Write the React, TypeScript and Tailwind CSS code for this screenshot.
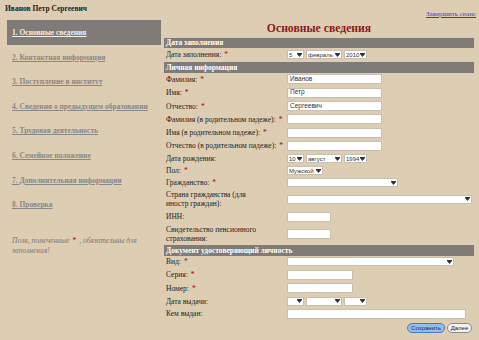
const serif = { fontFamily: '"Liberation Serif", "Times New Roman", serif' };
const sans = { fontFamily: '"Liberation Sans", Arial, sans-serif' };

const menu = [
  "1. Основные сведения",
  "2. Контактная информация",
  "3. Поступление в институт",
  "4. Сведения о предыдущем образовании",
  "5. Трудовая деятельность",
  "6. Семейное положение",
  "7. Дополнительная информация",
  "8. Проверка",
];

function Req() {
  return <span className="ml-[3px] text-[#b00000]">*</span>;
}

function Arrow() {
  return (
    <svg width="5" height="4" viewBox="0 0 5 4" className="shrink-0">
      <rect x="0" y="0" width="5" height="1" fill="#333" />
      <polygon points="0,1 5,1 2.5,4" fill="#333" />
    </svg>
  );
}

function Select({ w, value = "" }: { w: string; value?: string }) {
  return (
    <div
      className={`${w} h-[9px] bg-white border border-[#c6bfb2] flex items-center justify-between pl-[1px] pr-[1px] text-[6px] leading-none text-[#333] overflow-hidden whitespace-nowrap`}
      style={sans}
    >
      <span>{value}</span>
      <Arrow />
    </div>
  );
}

function Input({ w = "w-[95px]", value = "" }: { w?: string; value?: string }) {
  return (
    <div
      className={`${w} h-[10px] bg-white border border-[#c6bfb2] flex items-center px-[2px] text-[6.5px] leading-none text-[#333]`}
      style={sans}
    >
      {value}
    </div>
  );
}

function Row({ h, label, req, children }: { h: string; label: React.ReactNode; req?: boolean; children: React.ReactNode }) {
  return (
    <div className={`flex items-center px-[2px] ${h}`}>
      <div className="w-[121px] shrink-0 whitespace-nowrap text-[7.5px] leading-[9px] text-[#222]">
        {label}
        {req && <Req />}
      </div>
      <div className="flex items-center gap-[2px]">{children}</div>
    </div>
  );
}

function Bar({ title, cls }: { title: string; cls: string }) {
  return (
    <div className={`bg-[#7f7b77] text-white font-bold text-[7.5px] flex items-center px-[2px] ${cls}`}>
      {title}
    </div>
  );
}

function DateSelects({ d = "", m = "", y = "" }: { d?: string; m?: string; y?: string }) {
  return (
    <>
      <Select w="w-[17px]" value={d} />
      <Select w="w-[36px]" value={m} />
      <Select w="w-[23px]" value={y} />
    </>
  );
}

export default function App() {
  return (
    <div className="w-[479px] h-[340px] bg-[#ddcdb3] overflow-hidden" style={serif}>
      <div className="h-[20px] flex justify-between pl-[5px] pr-[3px]">
        <div className="pt-[3px] text-[7.5px] font-bold text-[#222]">Иванов Петр Сергеевич</div>
        <a className="self-end pb-[1px] text-[7px] text-[#3a3acc] underline">Завершить сеанс</a>
      </div>
      <div className="flex">
        <div className="w-[161px] pl-[7px] shrink-0">
          <div className="w-[154px]">
            {menu.map((m, i) => (
              <div
                key={m}
                className={`flex items-center pl-[5px] text-[7.5px] font-bold underline whitespace-nowrap ${
                  i === 0 ? "h-[25px] bg-[#7f7b77] text-[#f2eee8]" : "h-[24.6px] text-[#8a8784]"
                }`}
              >
                {m}
              </div>
            ))}
          </div>
          <div className="mt-[19px] pl-[5px] text-[7.5px] leading-[10px] italic text-[#7d7873]">
            <div className="flex whitespace-nowrap">
              <span>Поля, помеченные</span>
              <span className="mx-[3px] not-italic text-[#b00000]">*</span>
              <span>, обязательны для</span>
            </div>
            <div>заполнения!</div>
          </div>
        </div>
        <div className="ml-[3px] w-[310px]">
          <div className="h-[18px] flex items-center justify-center text-[11.7px] font-bold text-[#8b1a1a]">
            Основные сведения
          </div>
          <Bar title="Дата заполнения" cls="h-[10px]" />
          <Row h="h-[13px]" label="Дата заполнения:" req>
            <DateSelects d="5" m="февраль" y="2010" />
          </Row>
          <Bar title="Личная информация" cls="h-[10.7px] mt-[1px]" />
          <Row h="h-[13.33px]" label="Фамилия:" req><Input value="Иванов" /></Row>
          <Row h="h-[13.33px]" label="Имя:" req><Input value="Петр" /></Row>
          <Row h="h-[13.33px]" label="Отчество:" req><Input value="Сергеевич" /></Row>
          <Row h="h-[13.33px]" label="Фамилия (в родительном падеже):" req><Input /></Row>
          <Row h="h-[13.33px]" label="Имя (в родительном падеже):" req><Input /></Row>
          <Row h="h-[13.33px]" label="Отчество (в родительном падеже):" req><Input /></Row>
          <Row h="h-[12px]" label="Дата рождения:">
            <DateSelects d="10" m="август" y="1994" />
          </Row>
          <Row h="h-[12px]" label="Пол:" req><Select w="w-[36px]" value="Мужской" /></Row>
          <Row h="h-[12px]" label="Гражданство:" req><Select w="w-[111px]" /></Row>
          <Row h="h-[21.6px]" label={<>Страна гражданства (для<br />иностр граждан):</>}>
            <Select w="w-[185px]" />
          </Row>
          <Row h="h-[13.33px]" label="ИНН:"><Input w="w-[44px]" /></Row>
          <Row h="h-[21.4px]" label={<>Свидетельство пенсионного<br />страхования:</>}>
            <Input w="w-[44px]" />
          </Row>
          <Bar title="Документ удостоверяющий личность" cls="h-[10.7px]" />
          <Row h="h-[12.5px]" label="Вид:" req><Select w="w-[167px]" /></Row>
          <Row h="h-[13.33px]" label="Серия:" req><Input w="w-[66px]" /></Row>
          <Row h="h-[13.33px]" label="Номер:" req><Input w="w-[66px]" /></Row>
          <Row h="h-[12.5px]" label="Дата выдачи:"><DateSelects /></Row>
          <Row h="h-[13.33px]" label="Кем выдан:"><Input w="w-[179px]" /></Row>
          <div className="flex justify-end gap-[2px] pr-[2px] mt-[2px] text-[6px]" style={sans}>
            <button className="w-[38px] h-[10px] rounded-full border border-[#4a78b8] bg-[#94bdea] text-[#12305a] leading-none">
              Сохранить
            </button>
            <button className="w-[25px] h-[10px] rounded-full border border-[#8a8a8a] bg-[#f2f2f2] text-[#222] leading-none">
              Далее
            </button>
          </div>
        </div>
      </div>
    </div>
  );
}
